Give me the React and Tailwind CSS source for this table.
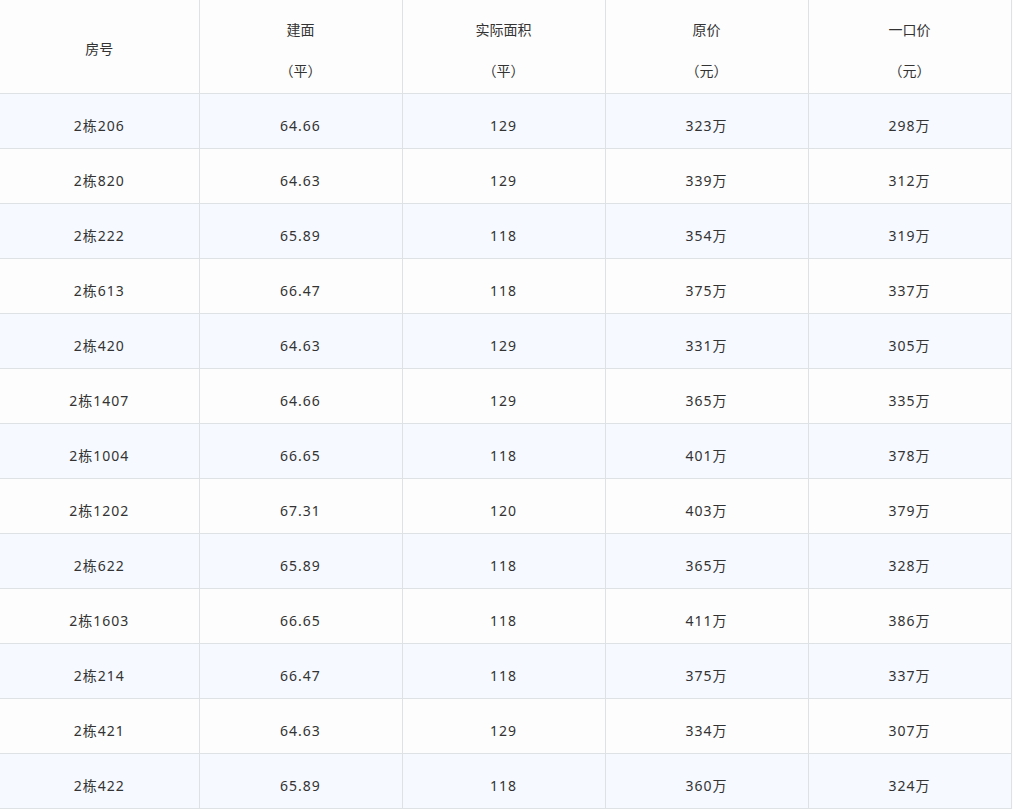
const rows = [
  ["2栋206", "64.66", "129", "323万", "298万"],
  ["2栋820", "64.63", "129", "339万", "312万"],
  ["2栋222", "65.89", "118", "354万", "319万"],
  ["2栋613", "66.47", "118", "375万", "337万"],
  ["2栋420", "64.63", "129", "331万", "305万"],
  ["2栋1407", "64.66", "129", "365万", "335万"],
  ["2栋1004", "66.65", "118", "401万", "378万"],
  ["2栋1202", "67.31", "120", "403万", "379万"],
  ["2栋622", "65.89", "118", "365万", "328万"],
  ["2栋1603", "66.65", "118", "411万", "386万"],
  ["2栋214", "66.47", "118", "375万", "337万"],
  ["2栋421", "64.63", "129", "334万", "307万"],
  ["2栋422", "65.89", "118", "360万", "324万"],
];

const heads = [
  ["房号"],
  ["建面", "（平）"],
  ["实际面积", "（平）"],
  ["原价", "（元）"],
  ["一口价", "（元）"],
];

export default function App() {
  return (
    <main
      className="w-[1013px] h-[809px] bg-[#fdfdfd] text-[#333] text-[14px] overflow-hidden"
      style={{ fontFamily: '"Noto Sans", "Noto Sans CJK SC", sans-serif' }}
    >
      <table className="table-fixed border-collapse w-[1011px]">
        <colgroup>
          <col className="w-[199px]" />
          <col className="w-[203px]" />
          <col className="w-[203px]" />
          <col className="w-[203px]" />
          <col className="w-[203px]" />
        </colgroup>
        <thead>
          <tr className="h-[93px]">
            {heads.map((h, i) => (
              <th
                key={i}
                className={`align-top font-normal border-r border-b border-[#dfe2e5] leading-6 ${h.length > 1 ? "pt-[18px]" : "pt-[37px]"}`}
              >
                {h.map((t, j) => (
                  <p key={j} className={j > 0 ? "mt-[17px]" : ""}>{t}</p>
                ))}
              </th>
            ))}
          </tr>
        </thead>
        <tbody>
          {rows.map((r, i) => (
            <tr key={i} className={`h-[55px] ${i % 2 === 0 ? "bg-[#f6f9ff]" : "bg-[#fdfdfd]"}`}>
              {r.map((c, j) => (
                <td key={j} className="text-center align-middle border-r border-b border-[#dfe2e5] leading-6 pt-[10px] tracking-[1px]">
                  {c}
                </td>
              ))}
            </tr>
          ))}
        </tbody>
      </table>
    </main>
  );
}
